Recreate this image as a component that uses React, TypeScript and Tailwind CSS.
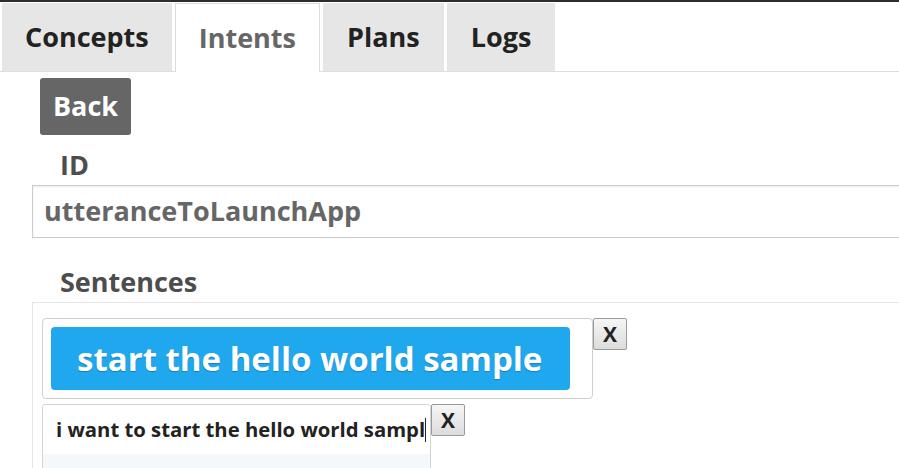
const tabs = [
  { name: 'Concepts', active: false, pad: 'px-[23px]' },
  { name: 'Intents', active: true, pad: 'px-[23px]' },
  { name: 'Plans', active: false, pad: 'px-[24px]' },
  { name: 'Logs', active: false, pad: 'px-[24px]' },
];

function XButton() {
  return (
    <button className="w-[34px] h-[32px] border border-[#9a9a9a] rounded-[2px] bg-gradient-to-b from-[#f6f6f6] to-[#dcdcdc] text-[21px] font-bold text-[#222] leading-none flex items-center justify-center shrink-0">
      X
    </button>
  );
}

export default function App() {
  return (
    <div
      className="w-full h-screen overflow-hidden bg-white border-t-2 border-[#2d2d2d]"
      style={{ fontFamily: '"Open Sans", "Noto Sans", sans-serif' }}
    >
      <div className="flex items-end pt-[1px] pl-[2px] border-b border-[#dedede] h-[70px]">
        {tabs.map((t) => (
          <div
            key={t.name}
            className={
              t.active
                ? `h-[69px] mr-[3px] ${t.pad} flex items-center bg-white border border-b-0 border-[#dcdcdc] -mb-[1px] text-[27px] font-bold text-[#666]`
                : `h-[68px] mr-[3px] ${t.pad} flex items-center bg-[#e6e6e6] text-[27px] font-bold text-[#222]`
            }
          >
            {t.name}
          </div>
        ))}
      </div>

      <div className="pl-[32px]">
        <button className="ml-[8px] mt-[6px] w-[91px] h-[57px] rounded-[3px] bg-[#666] text-white text-[27px] font-bold">
          Back
        </button>

        <div className="ml-[28px] mt-[14px] text-[27px] font-bold text-[#4d4d4d] leading-[32px]">ID</div>
        <div className="mt-[4px] w-[900px] h-[53px] border border-[#cccccc] shadow-[inset_0_1px_2px_rgba(0,0,0,0.08)] flex items-center pl-[11px] text-[27px] font-bold text-[#666]">
          utteranceToLaunchApp
        </div>

        <div className="ml-[28px] mt-[28px] text-[27px] font-bold text-[#4d4d4d] leading-[32px]">Sentences</div>
        <div className="mt-[4px] border-t border-l border-[#e6e6e6] pl-[9px] pt-[15px] h-[200px]">
          <div className="flex items-start">
            <div className="w-[551px] h-[81px] border border-[#cfcfcf] rounded-[4px] pl-[8px] pt-[8px]">
              <div className="w-[519px] h-[63px] rounded-[4px] bg-[#1fa8ee] text-white text-[33px] font-bold flex items-center pl-[26px] whitespace-nowrap [text-shadow:0_1px_1px_rgba(0,0,0,0.25)]">
                start the hello world sample
              </div>
            </div>
            <XButton />
          </div>
          <div className="flex items-start mt-[5px]">
            <div className="w-[389px] h-[80px] border border-[#d4d4d4] rounded-t-[3px] overflow-hidden">
              <div className="h-[49px] flex items-center pl-[13px] text-[20.3px] font-bold text-[#222] whitespace-nowrap">
                i want to start the hello world sampl
                <span className="inline-block w-[1px] h-[24px] bg-[#222] shrink-0" />
              </div>
              <div className="h-full bg-[#f4f8fb]" />
            </div>
            <XButton />
          </div>
        </div>
      </div>
    </div>
  );
}
